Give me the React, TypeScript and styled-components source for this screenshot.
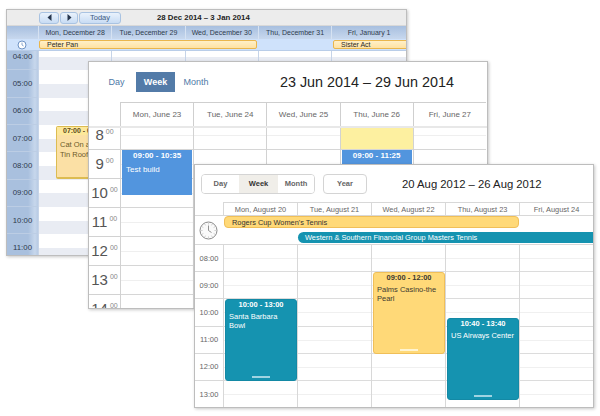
import React from 'react'
import styled, { createGlobalStyle } from 'styled-components'

const sans = '"Liberation Sans", Arial, sans-serif'

const GlobalStyle = createGlobalStyle`
  html, body { margin: 0; padding: 0; background: #fff; }
  body { font-family: ${sans}; }
`

const Desk = styled.div`
  position: relative;
  width: 600px;
  height: 416px;
  overflow: hidden;
  background: #fff;
`

const Window = styled.div<{ $x: number; $y: number; $w: number; $h: number }>`
  position: absolute;
  left: ${(p) => p.$x}px;
  top: ${(p) => p.$y}px;
  width: ${(p) => p.$w}px;
  height: ${(p) => p.$h}px;
  box-sizing: border-box;
  display: flex;
  flex-direction: column;
  overflow: hidden;
  background: #fff;
  border: 1px solid #bdbdbd;
  box-shadow: 1px 1px 3px rgba(0, 0, 0, 0.22);
`

const Body = styled.div<{ $offset: number; $cols: string }>`
  flex: 1;
  min-height: 0;
  overflow: hidden;
  display: grid;
  grid-template-columns: ${(p) => p.$cols};
  align-content: start;
  & > * {
    margin-top: ${(p) => p.$offset}px;
  }
`

const Column = styled.div`
  position: relative;
`

/* ---------- old blue scheduler ---------- */

const OldToolbar = styled.div`
  height: 16px;
  flex-shrink: 0;
  box-sizing: border-box;
  display: flex;
  align-items: center;
  padding-left: 32px;
  background: #ececec;
  border-bottom: 1px solid #d8d8d8;
`

const OldButton = styled.div<{ $w: number }>`
  width: ${(p) => p.$w}px;
  height: 12px;
  margin-right: 1px;
  display: flex;
  align-items: center;
  justify-content: center;
  box-sizing: border-box;
  border: 1px solid #a9c3e2;
  border-radius: 3px;
  background: linear-gradient(#e9f2fc, #c8dcf4);
  font-size: 7.5px;
  color: #3d5a80;
`

const OldTitle = styled.div`
  margin-left: 35px;
  font-size: 7.8px;
  font-weight: bold;
  color: #222;
`

const OldHeader = styled.div`
  height: 13px;
  flex-shrink: 0;
  display: grid;
  grid-template-columns: 31px repeat(4, 73.3px) 1fr;
  background: linear-gradient(#a7bfdf, #c8d8ee);
`

const OldHeaderCell = styled.div`
  display: flex;
  align-items: center;
  justify-content: center;
  font-size: 7px;
  color: #2f3c4e;
  border-left: 1px solid #d6e2f2;
  &:first-child {
    border-left: none;
  }
`

const OldAllDay = styled.div`
  position: relative;
  height: 12px;
  flex-shrink: 0;
  background: #cfe2fb;
  border-bottom: 1px solid #b9cde8;
  box-sizing: border-box;
`

const OldClock = styled.svg`
  position: absolute;
  left: 10px;
  top: 1px;
`

const OldBar = styled.div<{ $x: number; $w: number }>`
  position: absolute;
  left: ${(p) => p.$x}px;
  width: ${(p) => p.$w}px;
  top: 1px;
  height: 9px;
  box-sizing: border-box;
  padding-left: 7px;
  display: flex;
  align-items: center;
  border: 1px solid #eab64c;
  border-radius: 2px;
  background: linear-gradient(#fff0c8, #ffe2a2);
  font-size: 7px;
  color: #2a2a2a;
`

const OldTimeCell = styled.div`
  height: 27.33px;
  box-sizing: border-box;
  display: flex;
  align-items: center;
  justify-content: center;
  font-size: 7.8px;
  color: #2e3a4c;
  border-bottom: 1px solid #bccde4;
  background: linear-gradient(90deg, #a9c0de 0, #a9c0de 68%, #c7d7ec 90%, #b8cbe4 100%);
`

const OldDayCol = styled(Column)`
  height: 273px;
  border-left: 1px solid #c6d4e8;
  background: repeating-linear-gradient(#fff 0, #fff 13.67px, #e9ecf3 13.67px, #e9ecf3 27.33px);
`

const OldEvent = styled.div`
  position: absolute;
  left: 17px;
  width: 70px;
  top: 83px;
  height: 53px;
  box-sizing: border-box;
  border: 1px solid #dcbc52;
  border-bottom-width: 2px;
  border-radius: 2px;
  background: #fbe0a5;
  font-size: 7.5px;
  line-height: 9.5px;
  color: #6b5a2a;
`

const OldEventTime = styled.div`
  height: 8px;
  line-height: 8px;
  padding-left: 6px;
  font-size: 7px;
  font-weight: bold;
  white-space: nowrap;
  color: #5b4a1e;
  background: #fde89a;
`

const OldEventText = styled.div`
  padding: 5px 0 0 3px;
`

/* ---------- flat blue scheduler ---------- */

const FlatToolbar = styled.div`
  height: 40px;
  flex-shrink: 0;
  display: flex;
  align-items: center;
  padding-left: 17px;
  box-sizing: border-box;
`

const FlatTabs = styled.div`
  display: flex;
  gap: 9px;
`

const FlatTab = styled.div<{ $active?: boolean; $w: number }>`
  width: ${(p) => p.$w}px;
  height: 20px;
  display: flex;
  align-items: center;
  justify-content: center;
  font-size: 9px;
  font-weight: ${(p) => (p.$active ? 'bold' : 'normal')};
  color: ${(p) => (p.$active ? '#fff' : '#4f7aa8')};
  background: ${(p) => (p.$active ? '#537ba8' : 'transparent')};
`

const FlatTitle = styled.div`
  margin-left: 72px;
  font-size: 14.35px;
  color: #222;
  white-space: nowrap;
`

const FlatHeader = styled.div`
  height: 24px;
  flex-shrink: 0;
  display: grid;
  grid-template-columns: 31px repeat(5, 73.2px);
  border-bottom: 2px solid #e8e8e8;
`

const FlatHeaderCell = styled.div`
  display: flex;
  align-items: center;
  justify-content: center;
  font-size: 8px;
  color: #666;
  border-left: 1px solid #cfcfcf;
  border-top: 1px solid #cfcfcf;
  &:first-child {
    border: none;
  }
`

const FlatTimeCell = styled.div`
  height: 29px;
  box-sizing: border-box;
  display: flex;
  align-items: center;
  justify-content: center;
  gap: 2px;
  font-size: 15px;
  color: #555;
  border-bottom: 1px solid #d2d2d2;
`

const FlatSup = styled.span`
  font-size: 7px;
  color: #888;
  margin-bottom: 7px;
`

const FlatSlot = styled.div<{ $hl?: boolean }>`
  height: 29px;
  box-sizing: border-box;
  border-bottom: 1px solid #d6d6d6;
  background: ${(p) =>
    p.$hl
      ? '#fdf0a0'
      : 'linear-gradient(transparent 14px, #efefef 14px, #efefef 15px, transparent 15px)'};
`

const FlatDayCol = styled(Column)`
  border-left: 1px solid #d2d2d2;
`

const FlatEvent = styled.div`
  position: absolute;
  left: 1px;
  right: 1px;
  top: 29px;
  height: 45px;
  box-sizing: border-box;
  background: #5295de;
  color: #fff;
  font-size: 8px;
`

const FlatEventTime = styled.div`
  text-align: center;
  font-weight: bold;
  line-height: 11px;
`

const FlatEventText = styled.div`
  padding: 3px 0 0 4px;
  line-height: 11px;
`

/* ---------- white scheduler, on top ---------- */

const TopToolbar = styled.div`
  height: 37px;
  flex-shrink: 0;
  display: flex;
  align-items: center;
  padding: 0 0 0 6px;
  box-sizing: border-box;
`

const Segment = styled.div`
  display: flex;
  height: 20px;
  box-sizing: border-box;
  border: 1px solid #d4d4d4;
  border-radius: 4px;
  overflow: hidden;
`

const SegmentItem = styled.div<{ $active?: boolean; $w: number }>`
  width: ${(p) => p.$w}px;
  display: flex;
  align-items: center;
  justify-content: center;
  font-size: 7.5px;
  font-weight: bold;
  color: ${(p) => (p.$active ? '#333' : '#666')};
  background: ${(p) => (p.$active ? '#f0eee9' : '#fff')};
`

const YearButton = styled(Segment)`
  width: 44px;
  margin-left: 8px;
  align-items: center;
  justify-content: center;
  font-size: 7.5px;
  font-weight: bold;
  color: #666;
`

const TopTitle = styled.div`
  margin-left: 35px;
  font-size: 11.3px;
  color: #222;
  white-space: nowrap;
`

const TopHeader = styled.div`
  height: 13px;
  flex-shrink: 0;
  display: grid;
  grid-template-columns: 28px repeat(5, 74px);
`

const TopHeaderCell = styled.div`
  display: flex;
  align-items: center;
  justify-content: center;
  font-size: 7.4px;
  color: #666;
  border-left: 1px solid #d8d8d8;
  border-top: 1px solid #d8d8d8;
  &:first-child {
    border: none;
  }
`

const TopAllDay = styled.div`
  position: relative;
  height: 30px;
  flex-shrink: 0;
  box-sizing: border-box;
  border-top: 1px solid #d8d8d8;
  border-bottom: 1px solid #d8d8d8;
`

const TopClock = styled.svg`
  position: absolute;
  left: 4px;
  top: 5px;
`

const TopBar = styled.div<{ $x: number; $w: number; $y: number; $teal?: boolean }>`
  position: absolute;
  left: ${(p) => p.$x}px;
  width: ${(p) => p.$w}px;
  top: ${(p) => p.$y}px;
  height: ${(p) => (p.$teal ? 11 : 12)}px;
  box-sizing: border-box;
  padding-left: 7px;
  display: flex;
  align-items: center;
  font-size: 7.4px;
  white-space: nowrap;
  color: ${(p) => (p.$teal ? '#fff' : '#333')};
  background: ${(p) => (p.$teal ? '#1593b0' : '#ffd978')};
  border: ${(p) => (p.$teal ? 'none' : '1px solid #f0bf58')};
  border-radius: ${(p) => (p.$teal ? '6px 0 0 6px' : '4px')};
`

const TopTimeCell = styled.div`
  height: 27.2px;
  box-sizing: border-box;
  display: flex;
  align-items: center;
  justify-content: center;
  font-size: 7.5px;
  color: #666;
  border-bottom: 1px solid #d8d8d8;
`

const TopSlot = styled.div`
  height: 27.2px;
  box-sizing: border-box;
  border-bottom: 1px solid #dcdcdc;
  background: linear-gradient(transparent 13px, #f0f0f0 13px, #f0f0f0 14px, transparent 14px);
`

const TopDayCol = styled(Column)`
  border-left: 1px solid #d8d8d8;
`

const TopEvent = styled.div<{ $top: number; $h: number; $teal?: boolean }>`
  position: absolute;
  left: 1px;
  width: 72px;
  top: ${(p) => p.$top}px;
  height: ${(p) => p.$h}px;
  box-sizing: border-box;
  border-radius: 3px;
  font-size: 7.5px;
  color: ${(p) => (p.$teal ? '#fff' : '#3d3a30')};
  background: ${(p) => (p.$teal ? '#1593b0' : '#ffd978')};
  border: 1px solid ${(p) => (p.$teal ? '#1389a5' : '#f0bf58')};
`

const TopEventTime = styled.div`
  text-align: center;
  font-weight: bold;
  font-size: 7.5px;
  line-height: 9px;
`

const TopEventText = styled.div`
  padding: 3px 0 0 3px;
  line-height: 9px;
  white-space: nowrap;
`

const Grip = styled.div<{ $teal?: boolean }>`
  position: absolute;
  left: 50%;
  bottom: 2px;
  width: 18px;
  height: 2px;
  margin-left: -9px;
  background: ${(p) => (p.$teal ? '#9fd4e2' : '#fff4d0')};
`

const oldDays = ['Mon, December 28', 'Tue, December 29', 'Wed, December 30', 'Thu, December 31', 'Fri, January 1']
const flatDays = ['Mon, June 23', 'Tue, June 24', 'Wed, June 25', 'Thu, June 26', 'Fri, June 27']
const topDays = ['Mon, August 20', 'Tue, August 21', 'Wed, August 22', 'Thu, August 23', 'Fri, August 24']
const oldHours = ['04:00', '05:00', '06:00', '07:00', '08:00', '09:00', '10:00', '11:00', '12:00']
const flatHours = ['8', '9', '10', '11', '12', '13', '14']
const topHours = ['08:00', '09:00', '10:00', '11:00', '12:00', '13:00']

const Play: React.FC<{ flip?: boolean }> = ({ flip }) => (
  <svg width="5" height="7" viewBox="0 0 5 7">
    <path d={flip ? 'M4.5 0v7L0.5 3.5z' : 'M0.5 0v7l4-3.5z'} fill="#26364d" />
  </svg>
)

const OldCalendar = () => (
  <Window $x={6} $y={9} $w={401} $h={247}>
    <OldToolbar>
      <OldButton $w={20}><Play flip /></OldButton>
      <OldButton $w={18}><Play /></OldButton>
      <OldButton $w={42}>Today</OldButton>
      <OldTitle>28 Dec 2014 – 3 Jan 2014</OldTitle>
    </OldToolbar>
    <OldHeader>
      <OldHeaderCell />
      {oldDays.map((d) => <OldHeaderCell key={d}>{d}</OldHeaderCell>)}
    </OldHeader>
    <OldAllDay>
      <OldClock width="10" height="10" viewBox="0 0 10 10">
        <circle cx="5" cy="5" r="4" fill="#fff" stroke="#6f93c4" strokeWidth="1" />
        <path d="M5 2.6V5l1.6 1" fill="none" stroke="#6f93c4" strokeWidth="0.8" />
      </OldClock>
      <OldBar $x={32} $w={218}>Peter Pan</OldBar>
      <OldBar $x={326} $w={80}>Sister Act</OldBar>
    </OldAllDay>
    <Body $offset={-8} $cols="31px repeat(4, 73.3px) 1fr">
      <Column>
        {oldHours.map((h) => <OldTimeCell key={h}>{h}</OldTimeCell>)}
      </Column>
      {oldDays.map((d, i) => (
        <OldDayCol key={d}>
          {i === 0 && (
            <OldEvent>
              <OldEventTime>07:00 - 09:00</OldEventTime>
              <OldEventText>Cat On a<br />Tin Roof</OldEventText>
            </OldEvent>
          )}
        </OldDayCol>
      ))}
    </Body>
  </Window>
)

const FlatCalendar = () => (
  <Window $x={88} $y={61} $w={400} $h={248}>
    <FlatToolbar>
      <FlatTabs>
        <FlatTab $w={21}>Day</FlatTab>
        <FlatTab $w={39} $active>Week</FlatTab>
        <FlatTab $w={24}>Month</FlatTab>
      </FlatTabs>
      <FlatTitle>23 Jun 2014 – 29 Jun 2014</FlatTitle>
    </FlatToolbar>
    <FlatHeader>
      <FlatHeaderCell />
      {flatDays.map((d) => <FlatHeaderCell key={d}>{d}</FlatHeaderCell>)}
    </FlatHeader>
    <Body $offset={-7.5} $cols="31px repeat(5, 73.2px)">
      <Column>
        {flatHours.map((h) => (
          <FlatTimeCell key={h}>{h}<FlatSup>00</FlatSup></FlatTimeCell>
        ))}
      </Column>
      {flatDays.map((d, i) => (
        <FlatDayCol key={d}>
          {flatHours.map((h) => (
            <FlatSlot key={h} $hl={i === 3 && h === '8'} />
          ))}
          {i === 0 && (
            <FlatEvent>
              <FlatEventTime>09:00 - 10:35</FlatEventTime>
              <FlatEventText>Test build</FlatEventText>
            </FlatEvent>
          )}
          {i === 3 && (
            <FlatEvent>
              <FlatEventTime>09:00 - 11:25</FlatEventTime>
            </FlatEvent>
          )}
        </FlatDayCol>
      ))}
    </Body>
  </Window>
)

const clockTicks = Array.from({ length: 12 }, (_, i) => i * 30)

const TopCalendar = () => (
  <Window $x={194} $y={164} $w={400} $h={244}>
    <TopToolbar>
      <Segment>
        <SegmentItem $w={37}>Day</SegmentItem>
        <SegmentItem $w={39} $active>Week</SegmentItem>
        <SegmentItem $w={36}>Month</SegmentItem>
      </Segment>
      <YearButton>Year</YearButton>
      <TopTitle>20 Aug 2012 – 26 Aug 2012</TopTitle>
    </TopToolbar>
    <TopHeader>
      <TopHeaderCell />
      {topDays.map((d) => <TopHeaderCell key={d}>{d}</TopHeaderCell>)}
    </TopHeader>
    <TopAllDay>
      <TopClock width="19" height="19" viewBox="0 0 19 19">
        <circle cx="9.5" cy="9.5" r="8.5" fill="#fafafa" stroke="#8a8a8a" strokeWidth="1" />
        {clockTicks.map((a) => (
          <path key={a} d="M9.5 2.2v1.3" stroke="#aaa" strokeWidth="0.6" transform={`rotate(${a} 9.5 9.5)`} />
        ))}
        <path d="M9.5 4.5v5l3 2" fill="none" stroke="#777" strokeWidth="0.8" />
      </TopClock>
      <TopBar $x={29} $w={295} $y={0}>Rogers Cup Women's Tennis</TopBar>
      <TopBar $x={103} $w={296} $y={16} $teal>Western &amp; Southern Financial Group Masters Tennis</TopBar>
    </TopAllDay>
    <Body $offset={0} $cols="28px repeat(5, 74px)">
      <Column>
        {topHours.map((h) => <TopTimeCell key={h}>{h}</TopTimeCell>)}
      </Column>
      {topDays.map((d, i) => (
        <TopDayCol key={d}>
          {topHours.map((h) => <TopSlot key={h} />)}
          {i === 0 && (
            <TopEvent $top={54} $h={82} $teal>
              <TopEventTime>10:00 - 13:00</TopEventTime>
              <TopEventText>Santa Barbara<br />Bowl</TopEventText>
              <Grip $teal />
            </TopEvent>
          )}
          {i === 2 && (
            <TopEvent $top={27} $h={82}>
              <TopEventTime>09:00 - 12:00</TopEventTime>
              <TopEventText>Palms Casino-the<br />Pearl</TopEventText>
              <Grip />
            </TopEvent>
          )}
          {i === 3 && (
            <TopEvent $top={73} $h={82} $teal>
              <TopEventTime>10:40 - 13:40</TopEventTime>
              <TopEventText>US Airways Center</TopEventText>
              <Grip $teal />
            </TopEvent>
          )}
        </TopDayCol>
      ))}
    </Body>
  </Window>
)

export default function App() {
  return (
    <Desk>
      <GlobalStyle />
      <OldCalendar />
      <FlatCalendar />
      <TopCalendar />
    </Desk>
  )
}
